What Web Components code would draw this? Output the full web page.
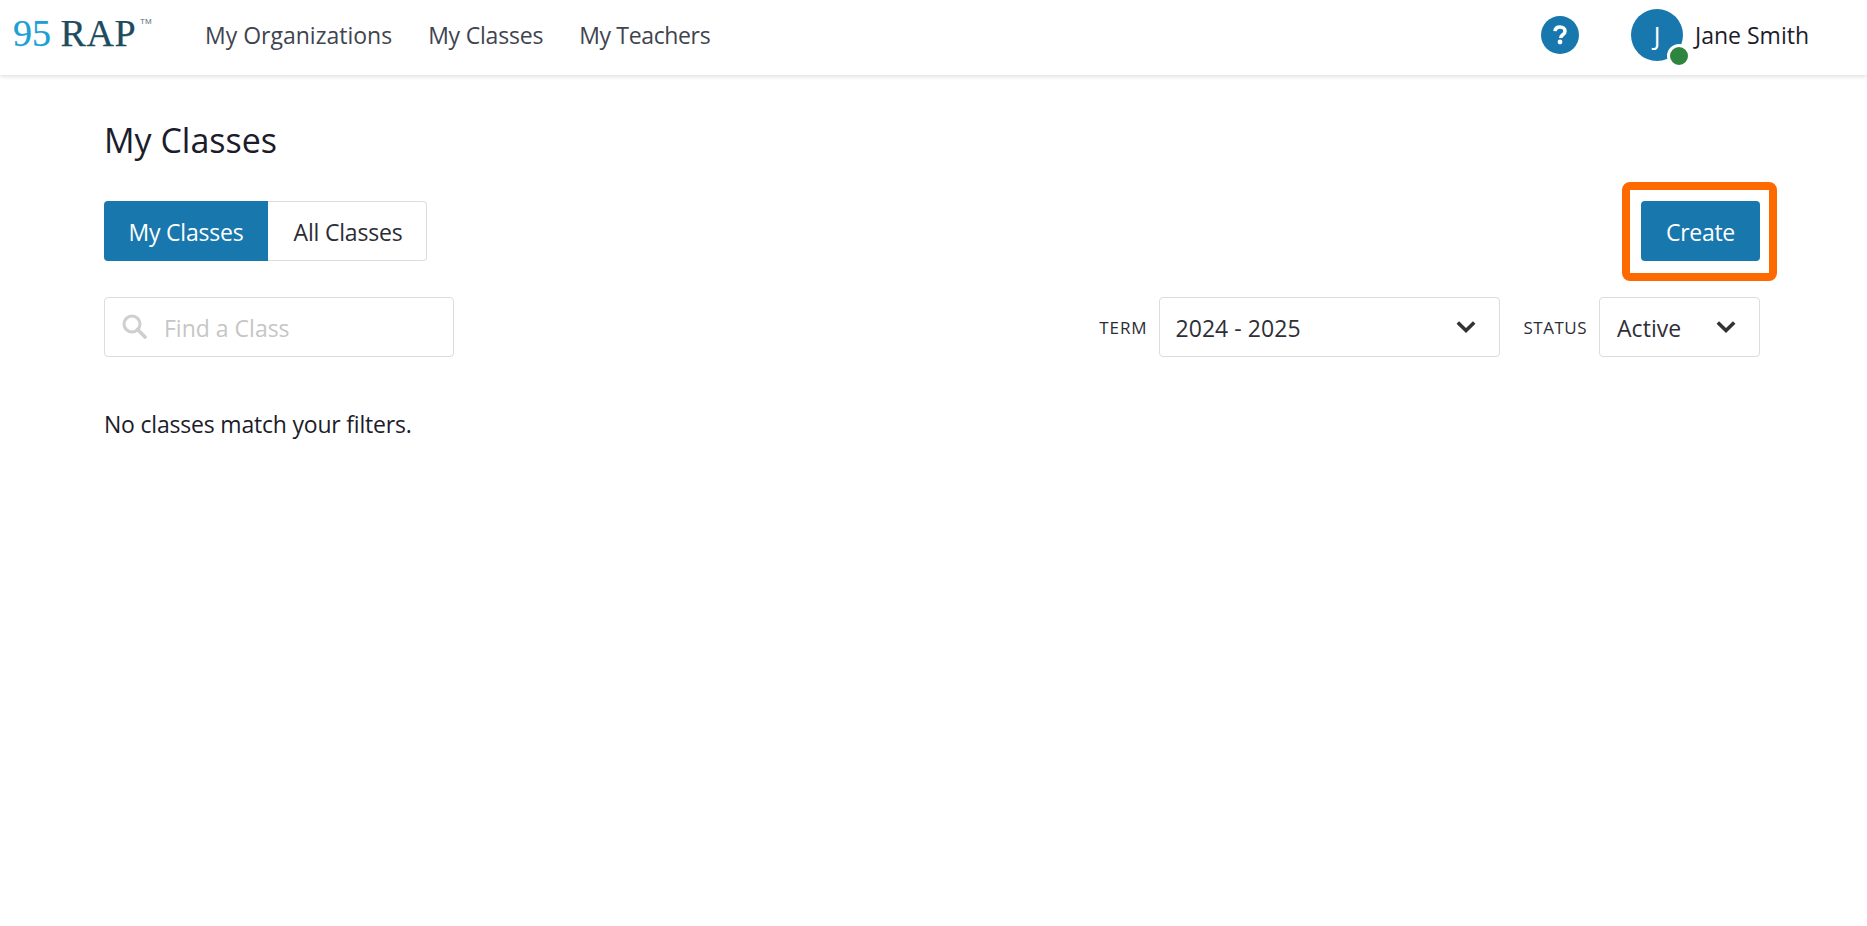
<!DOCTYPE html>
<html lang="en"><head><meta charset="utf-8"><title>My Classes</title>
<style>
html,body{margin:0;padding:0;background:#fff;height:100%}
body{font-family:"Open Sans","Noto Sans",sans-serif;color:#1c1c2b;overflow:hidden}
</style></head><body>
<app-header></app-header>
<classes-page></classes-page>
<script>
const BLUE='#1877ad';
function def(name,css,html){
  customElements.define(name,class extends HTMLElement{
    constructor(){super();const r=this.attachShadow({mode:'open'});
      r.innerHTML='<style>'+css+'</style>'+(typeof html==='function'?html(this):html);}
  });
}
def('brand-logo',`
:host{display:block;width:153px;margin-left:13px;padding-bottom:3px;font-family:"Liberation Serif",serif;font-size:38px;line-height:40px;white-space:nowrap;position:relative;-webkit-text-stroke:.25px currentColor}
.n{color:#1ba0d3}.r{color:#1d4c60;letter-spacing:.6px}
sup{font-size:8px;color:#56717f;position:absolute;top:4px;left:127px;line-height:10px;font-family:"Liberation Sans",sans-serif;-webkit-text-stroke:0}
`,`<span class="n">95</span> <span class="r">RAP</span><sup>TM</sup>`);
def('nav-link',`
:host{display:block;font-size:23px;letter-spacing:var(--ls,-.2px);color:#3f4450;white-space:nowrap}
`,`<slot></slot>`);
def('help-button',`
:host{display:flex;width:38px;height:38px;border-radius:50%;background:${BLUE};align-items:center;justify-content:center}
svg{display:block}
`,`<svg width="16" height="22" viewBox="0 0 16 22" aria-hidden="true"><path d="M3 7.2C3.2 4.6 5.2 3 8 3c2.900 0 5 1.700 5 4.200 0 2-1.200 3-2.500 3.900-1.200.8-1.700 1.400-1.700 2.900" fill="none" stroke="#fff" stroke-width="3.600"/><circle cx="8" cy="18" r="2.400" fill="#fff"/></svg>`);
def('user-chip',`
:host{display:flex;align-items:center;gap:12px}
.a{position:relative;width:52px;height:52px;border-radius:50%;background:${BLUE};color:#fff;font-size:25px;display:flex;align-items:center;justify-content:center;letter-spacing:0}
.d{position:absolute;right:-8px;bottom:-7px;width:18px;height:18px;border-radius:50%;background:#2e8540;border:3px solid #fff}
.n{font-size:23px;letter-spacing:0;color:#1c1c2b;white-space:nowrap}
`,`<div class="a">J<span class="d"></span></div><div class="n">Jane Smith</div>`);
def('app-header',`
:host{display:flex;align-items:center;height:75px;padding-bottom:6px;background:#fff;box-shadow:0 1px 5px rgba(0,0,0,.16);box-sizing:border-box;position:relative}
.nav{display:flex;gap:36px;margin-left:39px}
.right{margin-left:auto;display:flex;align-items:center;gap:52px;margin-right:58px}
`,`<brand-logo></brand-logo><div class="nav"><nav-link style="--ls:0px">My Organizations</nav-link><nav-link>My Classes</nav-link><nav-link style="--ls:-.35px">My Teachers</nav-link></div><div class="right"><help-button></help-button><user-chip></user-chip></div>`);
def('seg-toggle',`
:host{display:flex;height:60px;box-sizing:border-box;font-size:23px;letter-spacing:-.2px}
div{display:flex;align-items:center;justify-content:center;box-sizing:border-box;padding-top:2px}
.on{width:164px;background:${BLUE};color:#fff;border-radius:4px 0 0 4px}
.off{width:159px;border:1px solid #dcdcdc;border-left:0;border-radius:0 4px 4px 0;color:#2c2c35;padding-left:2px}
`,`<div class="on">My Classes</div><div class="off">All Classes</div>`);
def('create-button',`
:host{display:flex;position:relative;width:119px;height:60px;box-sizing:border-box;padding-top:1px;background:${BLUE};color:#fff;border-radius:4px;align-items:center;justify-content:center;font-size:23px;letter-spacing:-.3px}
.hl{position:absolute;left:-19px;top:-19px;width:155px;height:99px;box-sizing:border-box;border:8px solid #ff6a00;border-radius:8px;pointer-events:none}
`,`<slot></slot><span class="hl"></span>`);
def('search-box',`
:host{display:flex;align-items:center;width:350px;height:60px;box-sizing:border-box;border:1px solid #dcdcdc;border-radius:4px;padding:2px 0 0 17px;gap:17px;color:#c6c6c6;font-size:23px}
svg{display:block;flex:none;margin-top:-3px}
`,`<svg width="25" height="25" viewBox="0 0 25 25" aria-hidden="true"><circle cx="10" cy="10" r="8" fill="none" stroke="#cfcfcf" stroke-width="3"/><path d="M15.500 15.500 23 23" stroke="#cfcfcf" stroke-width="3.600" stroke-linecap="round"/></svg><slot></slot>`);
def('filter-select',`
:host{display:flex;align-items:center;gap:var(--g,12px)}
.l{font-size:17px;letter-spacing:var(--lls,.9px);color:#2c2c35;text-transform:uppercase}
.b{display:flex;align-items:center;justify-content:space-between;width:var(--w);height:60px;box-sizing:border-box;border:1px solid #dcdcdc;border-radius:4px;padding:2px 23px 0 var(--pl,17px);font-size:23px;letter-spacing:.05px;color:#2f2f38}
svg{display:block;margin-top:-3px}
`,el=>`<span class="l">${el.getAttribute('label')}</span><div class="b"><slot></slot><svg width="20" height="14" viewBox="0 0 20 14" aria-hidden="true"><path d="M1.800 2.500 10 10.500 18.200 2.500" fill="none" stroke="#333" stroke-width="3.600"/></svg></div>`);
def('classes-page',`
:host{display:block;padding:0 107px 0 104px}
h1{margin:0;font-weight:400;font-size:34px;line-height:44px;padding-top:43px;color:#1c1c2b}
.row{display:flex;justify-content:space-between;align-items:center}
.r1{margin-top:39px}
.r2{margin-top:36px}
.filters{display:flex;gap:23px}
p{margin:52px 0 0;font-size:23px;letter-spacing:-.2px;line-height:30px;color:#1c1c2b}
`,`<h1>My Classes</h1>
<div class="row r1"><seg-toggle></seg-toggle><create-button>Create</create-button></div>
<div class="row r2"><search-box>Find a Class</search-box><div class="filters"><filter-select label="Term" style="--w:341px;--pl:15px">2024 - 2025</filter-select><filter-select label="Status" style="--w:161px;--lls:.5px">Active</filter-select></div></div>
<p>No classes match your filters.</p>`);
</script>
</body></html>
